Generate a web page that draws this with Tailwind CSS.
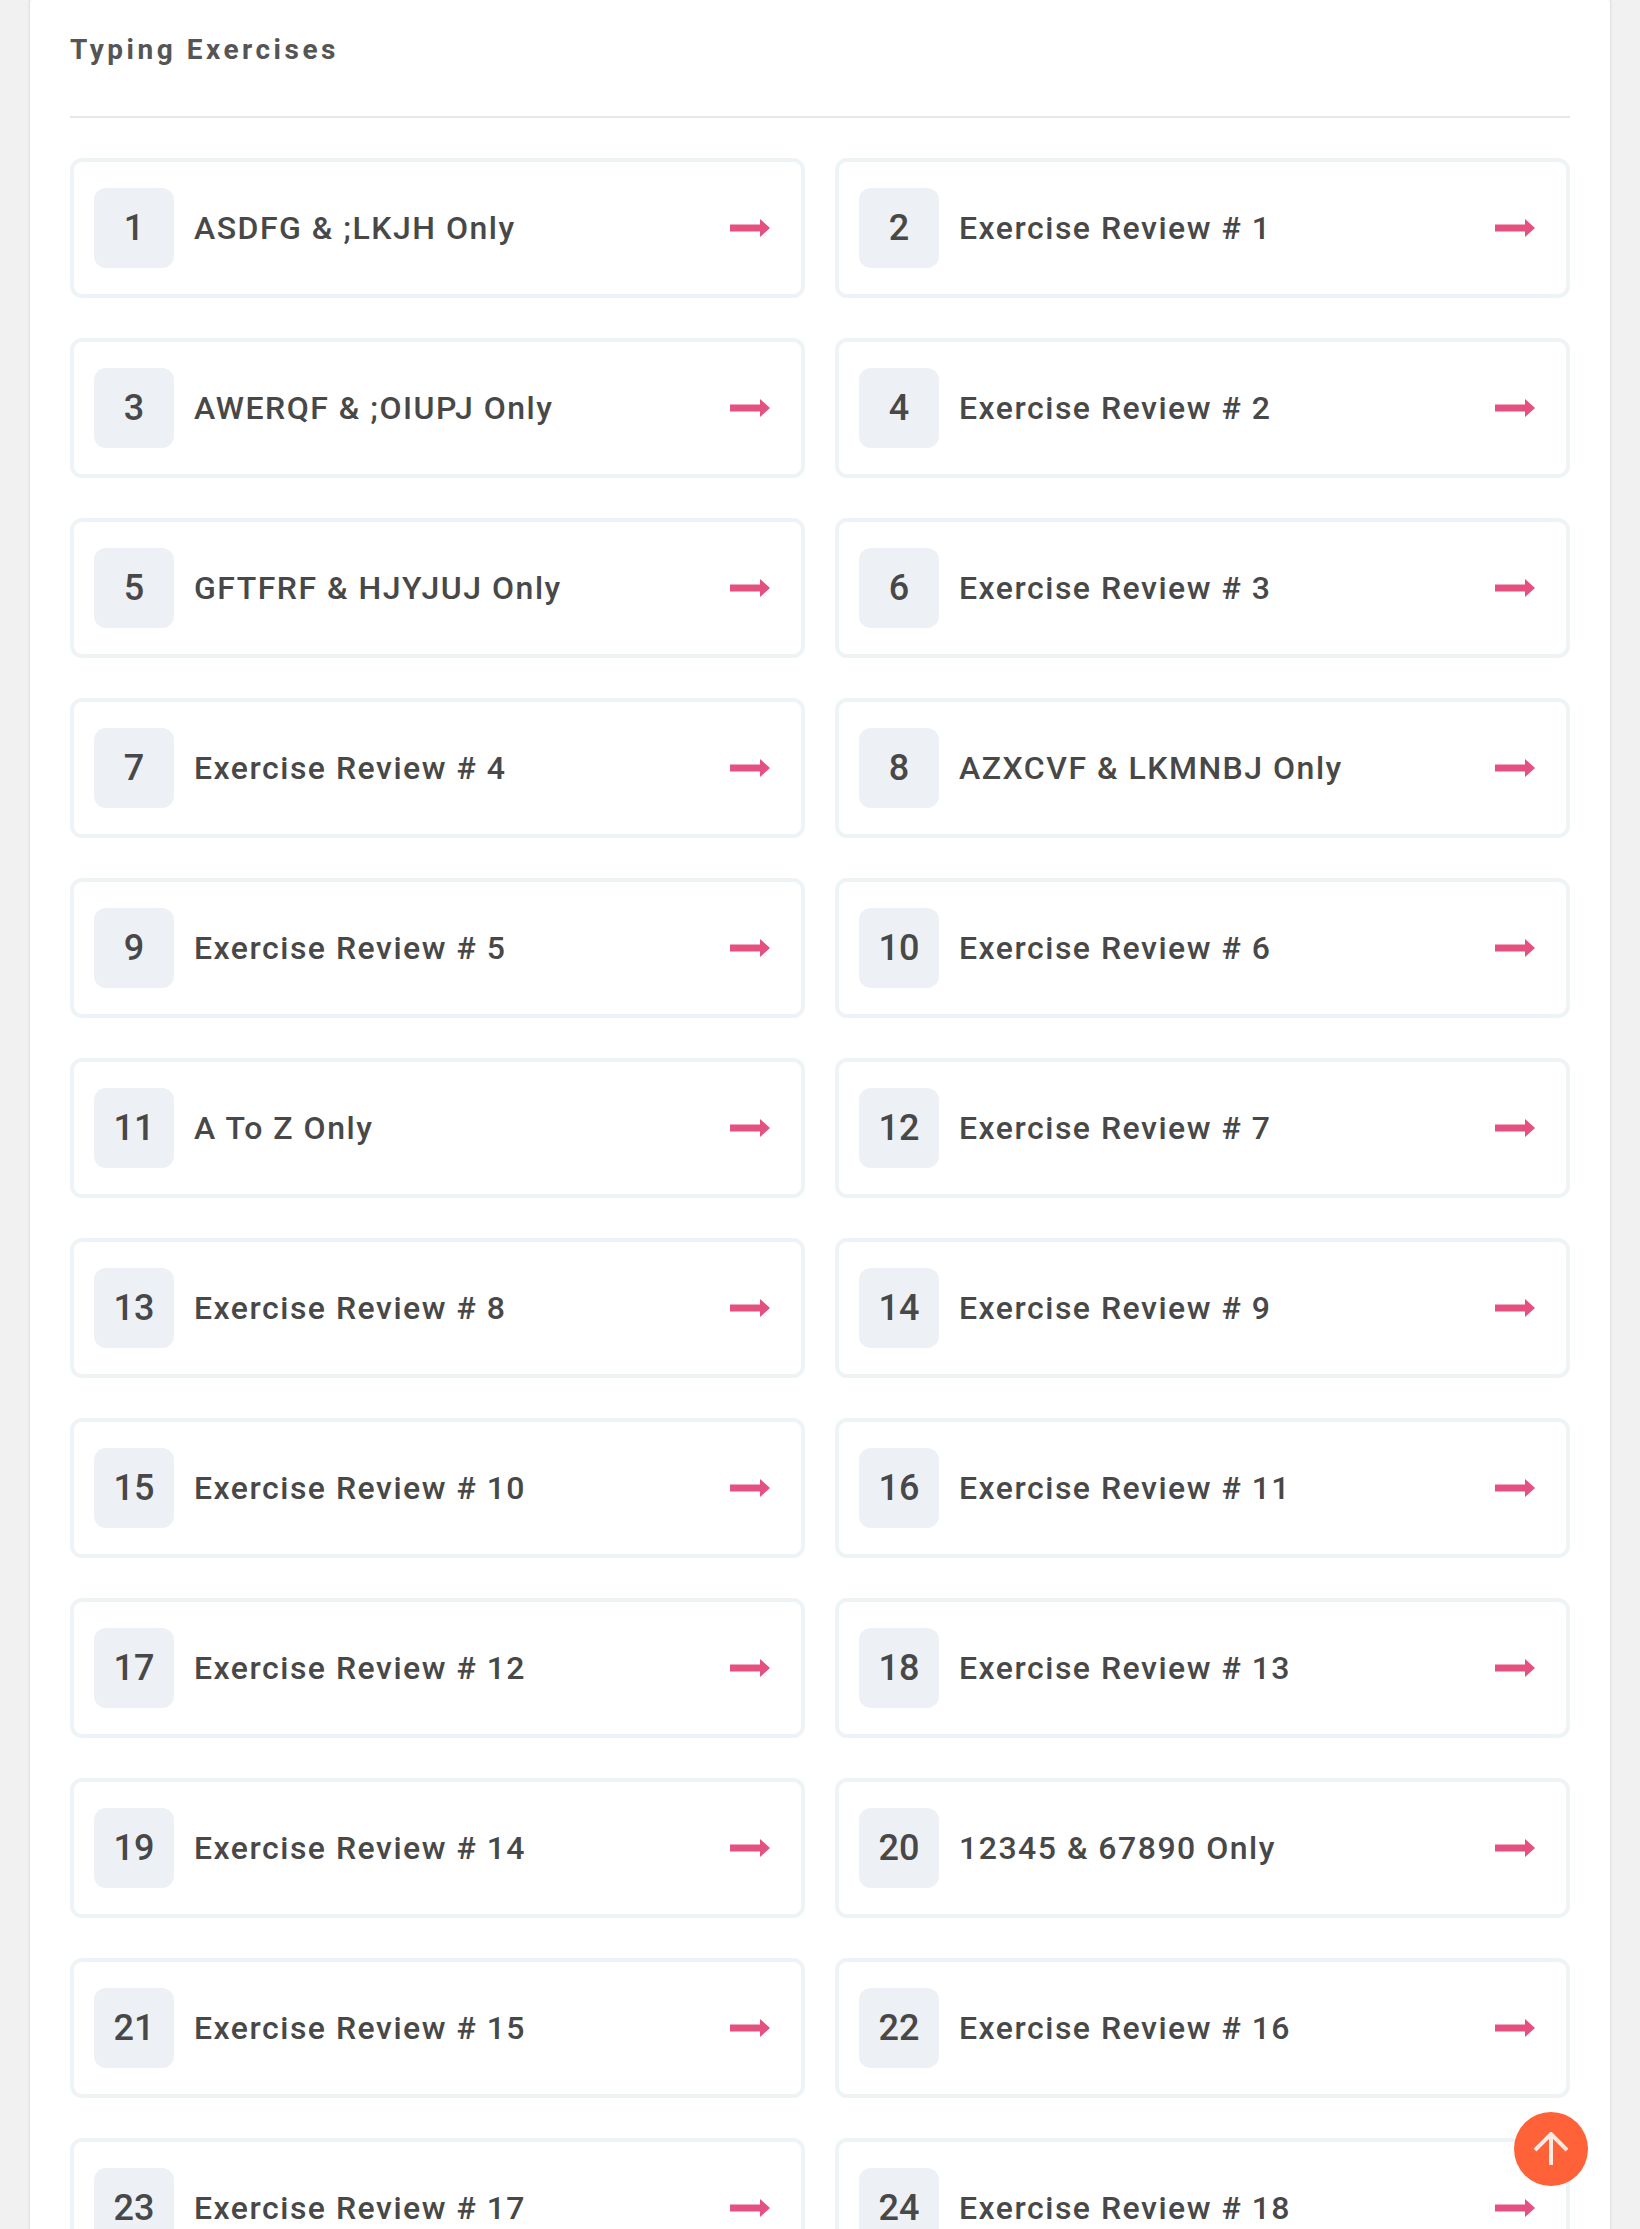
<!DOCTYPE html>
<html>
<head>
<meta charset="utf-8">
<script src="https://cdn.jsdelivr.net/npm/@tailwindcss/browser@4"></script>
</head>
<body class="bg-[#f1f1f2] font-['Roboto',sans-serif] h-[2229px] overflow-hidden">
<main class="mx-[30px] -mt-[12px] bg-white rounded-[16px] shadow-[0_0_3px_rgba(0,0,0,0.18)] px-[40px] pt-[12px] h-[2400px]">
  <h2 class="pt-[33px] pb-[50px] leading-[33px] text-[28px] font-bold tracking-[3.5px] text-[#555] border-b-2 border-[#e6e7e8]">Typing Exercises</h2>
  <div class="grid grid-cols-2 gap-x-[30px] gap-y-[40px] mt-[40px]">
    <a class="flex items-center h-[140px] border-4 border-[#eef3f6] rounded-[12px] pl-[20px] pr-[31px]"><span class="w-[80px] h-[80px] rounded-[12px] bg-[#edf1f5] flex items-center justify-center text-[36px] font-medium text-[#484848]">1</span><span class="ml-[20px] flex-1 text-[32px] font-medium tracking-[1.5px] text-[#484848]">ASDFG &amp; ;LKJH Only</span><svg class="w-[40px] h-[18px] text-[#e4507f]" viewBox="0 0 40 18"><path fill="currentColor" d="M0 5.5h30V0l10 9-10 9v-5.5H0z"/></svg></a>
    <a class="flex items-center h-[140px] border-4 border-[#eef3f6] rounded-[12px] pl-[20px] pr-[31px]"><span class="w-[80px] h-[80px] rounded-[12px] bg-[#edf1f5] flex items-center justify-center text-[36px] font-medium text-[#484848]">2</span><span class="ml-[20px] flex-1 text-[32px] font-medium tracking-[1.5px] text-[#484848]">Exercise Review # 1</span><svg class="w-[40px] h-[18px] text-[#e4507f]" viewBox="0 0 40 18"><path fill="currentColor" d="M0 5.5h30V0l10 9-10 9v-5.5H0z"/></svg></a>
    <a class="flex items-center h-[140px] border-4 border-[#eef3f6] rounded-[12px] pl-[20px] pr-[31px]"><span class="w-[80px] h-[80px] rounded-[12px] bg-[#edf1f5] flex items-center justify-center text-[36px] font-medium text-[#484848]">3</span><span class="ml-[20px] flex-1 text-[32px] font-medium tracking-[1.5px] text-[#484848]">AWERQF &amp; ;OIUPJ Only</span><svg class="w-[40px] h-[18px] text-[#e4507f]" viewBox="0 0 40 18"><path fill="currentColor" d="M0 5.5h30V0l10 9-10 9v-5.5H0z"/></svg></a>
    <a class="flex items-center h-[140px] border-4 border-[#eef3f6] rounded-[12px] pl-[20px] pr-[31px]"><span class="w-[80px] h-[80px] rounded-[12px] bg-[#edf1f5] flex items-center justify-center text-[36px] font-medium text-[#484848]">4</span><span class="ml-[20px] flex-1 text-[32px] font-medium tracking-[1.5px] text-[#484848]">Exercise Review # 2</span><svg class="w-[40px] h-[18px] text-[#e4507f]" viewBox="0 0 40 18"><path fill="currentColor" d="M0 5.5h30V0l10 9-10 9v-5.5H0z"/></svg></a>
    <a class="flex items-center h-[140px] border-4 border-[#eef3f6] rounded-[12px] pl-[20px] pr-[31px]"><span class="w-[80px] h-[80px] rounded-[12px] bg-[#edf1f5] flex items-center justify-center text-[36px] font-medium text-[#484848]">5</span><span class="ml-[20px] flex-1 text-[32px] font-medium tracking-[1.5px] text-[#484848]">GFTFRF &amp; HJYJUJ Only</span><svg class="w-[40px] h-[18px] text-[#e4507f]" viewBox="0 0 40 18"><path fill="currentColor" d="M0 5.5h30V0l10 9-10 9v-5.5H0z"/></svg></a>
    <a class="flex items-center h-[140px] border-4 border-[#eef3f6] rounded-[12px] pl-[20px] pr-[31px]"><span class="w-[80px] h-[80px] rounded-[12px] bg-[#edf1f5] flex items-center justify-center text-[36px] font-medium text-[#484848]">6</span><span class="ml-[20px] flex-1 text-[32px] font-medium tracking-[1.5px] text-[#484848]">Exercise Review # 3</span><svg class="w-[40px] h-[18px] text-[#e4507f]" viewBox="0 0 40 18"><path fill="currentColor" d="M0 5.5h30V0l10 9-10 9v-5.5H0z"/></svg></a>
    <a class="flex items-center h-[140px] border-4 border-[#eef3f6] rounded-[12px] pl-[20px] pr-[31px]"><span class="w-[80px] h-[80px] rounded-[12px] bg-[#edf1f5] flex items-center justify-center text-[36px] font-medium text-[#484848]">7</span><span class="ml-[20px] flex-1 text-[32px] font-medium tracking-[1.5px] text-[#484848]">Exercise Review # 4</span><svg class="w-[40px] h-[18px] text-[#e4507f]" viewBox="0 0 40 18"><path fill="currentColor" d="M0 5.5h30V0l10 9-10 9v-5.5H0z"/></svg></a>
    <a class="flex items-center h-[140px] border-4 border-[#eef3f6] rounded-[12px] pl-[20px] pr-[31px]"><span class="w-[80px] h-[80px] rounded-[12px] bg-[#edf1f5] flex items-center justify-center text-[36px] font-medium text-[#484848]">8</span><span class="ml-[20px] flex-1 text-[32px] font-medium tracking-[1.5px] text-[#484848]">AZXCVF &amp; LKMNBJ Only</span><svg class="w-[40px] h-[18px] text-[#e4507f]" viewBox="0 0 40 18"><path fill="currentColor" d="M0 5.5h30V0l10 9-10 9v-5.5H0z"/></svg></a>
    <a class="flex items-center h-[140px] border-4 border-[#eef3f6] rounded-[12px] pl-[20px] pr-[31px]"><span class="w-[80px] h-[80px] rounded-[12px] bg-[#edf1f5] flex items-center justify-center text-[36px] font-medium text-[#484848]">9</span><span class="ml-[20px] flex-1 text-[32px] font-medium tracking-[1.5px] text-[#484848]">Exercise Review # 5</span><svg class="w-[40px] h-[18px] text-[#e4507f]" viewBox="0 0 40 18"><path fill="currentColor" d="M0 5.5h30V0l10 9-10 9v-5.5H0z"/></svg></a>
    <a class="flex items-center h-[140px] border-4 border-[#eef3f6] rounded-[12px] pl-[20px] pr-[31px]"><span class="w-[80px] h-[80px] rounded-[12px] bg-[#edf1f5] flex items-center justify-center text-[36px] font-medium text-[#484848]">10</span><span class="ml-[20px] flex-1 text-[32px] font-medium tracking-[1.5px] text-[#484848]">Exercise Review # 6</span><svg class="w-[40px] h-[18px] text-[#e4507f]" viewBox="0 0 40 18"><path fill="currentColor" d="M0 5.5h30V0l10 9-10 9v-5.5H0z"/></svg></a>
    <a class="flex items-center h-[140px] border-4 border-[#eef3f6] rounded-[12px] pl-[20px] pr-[31px]"><span class="w-[80px] h-[80px] rounded-[12px] bg-[#edf1f5] flex items-center justify-center text-[36px] font-medium text-[#484848]">11</span><span class="ml-[20px] flex-1 text-[32px] font-medium tracking-[1.5px] text-[#484848]">A To Z Only</span><svg class="w-[40px] h-[18px] text-[#e4507f]" viewBox="0 0 40 18"><path fill="currentColor" d="M0 5.5h30V0l10 9-10 9v-5.5H0z"/></svg></a>
    <a class="flex items-center h-[140px] border-4 border-[#eef3f6] rounded-[12px] pl-[20px] pr-[31px]"><span class="w-[80px] h-[80px] rounded-[12px] bg-[#edf1f5] flex items-center justify-center text-[36px] font-medium text-[#484848]">12</span><span class="ml-[20px] flex-1 text-[32px] font-medium tracking-[1.5px] text-[#484848]">Exercise Review # 7</span><svg class="w-[40px] h-[18px] text-[#e4507f]" viewBox="0 0 40 18"><path fill="currentColor" d="M0 5.5h30V0l10 9-10 9v-5.5H0z"/></svg></a>
    <a class="flex items-center h-[140px] border-4 border-[#eef3f6] rounded-[12px] pl-[20px] pr-[31px]"><span class="w-[80px] h-[80px] rounded-[12px] bg-[#edf1f5] flex items-center justify-center text-[36px] font-medium text-[#484848]">13</span><span class="ml-[20px] flex-1 text-[32px] font-medium tracking-[1.5px] text-[#484848]">Exercise Review # 8</span><svg class="w-[40px] h-[18px] text-[#e4507f]" viewBox="0 0 40 18"><path fill="currentColor" d="M0 5.5h30V0l10 9-10 9v-5.5H0z"/></svg></a>
    <a class="flex items-center h-[140px] border-4 border-[#eef3f6] rounded-[12px] pl-[20px] pr-[31px]"><span class="w-[80px] h-[80px] rounded-[12px] bg-[#edf1f5] flex items-center justify-center text-[36px] font-medium text-[#484848]">14</span><span class="ml-[20px] flex-1 text-[32px] font-medium tracking-[1.5px] text-[#484848]">Exercise Review # 9</span><svg class="w-[40px] h-[18px] text-[#e4507f]" viewBox="0 0 40 18"><path fill="currentColor" d="M0 5.5h30V0l10 9-10 9v-5.5H0z"/></svg></a>
    <a class="flex items-center h-[140px] border-4 border-[#eef3f6] rounded-[12px] pl-[20px] pr-[31px]"><span class="w-[80px] h-[80px] rounded-[12px] bg-[#edf1f5] flex items-center justify-center text-[36px] font-medium text-[#484848]">15</span><span class="ml-[20px] flex-1 text-[32px] font-medium tracking-[1.5px] text-[#484848]">Exercise Review # 10</span><svg class="w-[40px] h-[18px] text-[#e4507f]" viewBox="0 0 40 18"><path fill="currentColor" d="M0 5.5h30V0l10 9-10 9v-5.5H0z"/></svg></a>
    <a class="flex items-center h-[140px] border-4 border-[#eef3f6] rounded-[12px] pl-[20px] pr-[31px]"><span class="w-[80px] h-[80px] rounded-[12px] bg-[#edf1f5] flex items-center justify-center text-[36px] font-medium text-[#484848]">16</span><span class="ml-[20px] flex-1 text-[32px] font-medium tracking-[1.5px] text-[#484848]">Exercise Review # 11</span><svg class="w-[40px] h-[18px] text-[#e4507f]" viewBox="0 0 40 18"><path fill="currentColor" d="M0 5.5h30V0l10 9-10 9v-5.5H0z"/></svg></a>
    <a class="flex items-center h-[140px] border-4 border-[#eef3f6] rounded-[12px] pl-[20px] pr-[31px]"><span class="w-[80px] h-[80px] rounded-[12px] bg-[#edf1f5] flex items-center justify-center text-[36px] font-medium text-[#484848]">17</span><span class="ml-[20px] flex-1 text-[32px] font-medium tracking-[1.5px] text-[#484848]">Exercise Review # 12</span><svg class="w-[40px] h-[18px] text-[#e4507f]" viewBox="0 0 40 18"><path fill="currentColor" d="M0 5.5h30V0l10 9-10 9v-5.5H0z"/></svg></a>
    <a class="flex items-center h-[140px] border-4 border-[#eef3f6] rounded-[12px] pl-[20px] pr-[31px]"><span class="w-[80px] h-[80px] rounded-[12px] bg-[#edf1f5] flex items-center justify-center text-[36px] font-medium text-[#484848]">18</span><span class="ml-[20px] flex-1 text-[32px] font-medium tracking-[1.5px] text-[#484848]">Exercise Review # 13</span><svg class="w-[40px] h-[18px] text-[#e4507f]" viewBox="0 0 40 18"><path fill="currentColor" d="M0 5.5h30V0l10 9-10 9v-5.5H0z"/></svg></a>
    <a class="flex items-center h-[140px] border-4 border-[#eef3f6] rounded-[12px] pl-[20px] pr-[31px]"><span class="w-[80px] h-[80px] rounded-[12px] bg-[#edf1f5] flex items-center justify-center text-[36px] font-medium text-[#484848]">19</span><span class="ml-[20px] flex-1 text-[32px] font-medium tracking-[1.5px] text-[#484848]">Exercise Review # 14</span><svg class="w-[40px] h-[18px] text-[#e4507f]" viewBox="0 0 40 18"><path fill="currentColor" d="M0 5.5h30V0l10 9-10 9v-5.5H0z"/></svg></a>
    <a class="flex items-center h-[140px] border-4 border-[#eef3f6] rounded-[12px] pl-[20px] pr-[31px]"><span class="w-[80px] h-[80px] rounded-[12px] bg-[#edf1f5] flex items-center justify-center text-[36px] font-medium text-[#484848]">20</span><span class="ml-[20px] flex-1 text-[32px] font-medium tracking-[1.5px] text-[#484848]">12345 &amp; 67890 Only</span><svg class="w-[40px] h-[18px] text-[#e4507f]" viewBox="0 0 40 18"><path fill="currentColor" d="M0 5.5h30V0l10 9-10 9v-5.5H0z"/></svg></a>
    <a class="flex items-center h-[140px] border-4 border-[#eef3f6] rounded-[12px] pl-[20px] pr-[31px]"><span class="w-[80px] h-[80px] rounded-[12px] bg-[#edf1f5] flex items-center justify-center text-[36px] font-medium text-[#484848]">21</span><span class="ml-[20px] flex-1 text-[32px] font-medium tracking-[1.5px] text-[#484848]">Exercise Review # 15</span><svg class="w-[40px] h-[18px] text-[#e4507f]" viewBox="0 0 40 18"><path fill="currentColor" d="M0 5.5h30V0l10 9-10 9v-5.5H0z"/></svg></a>
    <a class="flex items-center h-[140px] border-4 border-[#eef3f6] rounded-[12px] pl-[20px] pr-[31px]"><span class="w-[80px] h-[80px] rounded-[12px] bg-[#edf1f5] flex items-center justify-center text-[36px] font-medium text-[#484848]">22</span><span class="ml-[20px] flex-1 text-[32px] font-medium tracking-[1.5px] text-[#484848]">Exercise Review # 16</span><svg class="w-[40px] h-[18px] text-[#e4507f]" viewBox="0 0 40 18"><path fill="currentColor" d="M0 5.5h30V0l10 9-10 9v-5.5H0z"/></svg></a>
    <a class="flex items-center h-[140px] border-4 border-[#eef3f6] rounded-[12px] pl-[20px] pr-[31px]"><span class="w-[80px] h-[80px] rounded-[12px] bg-[#edf1f5] flex items-center justify-center text-[36px] font-medium text-[#484848]">23</span><span class="ml-[20px] flex-1 text-[32px] font-medium tracking-[1.5px] text-[#484848]">Exercise Review # 17</span><svg class="w-[40px] h-[18px] text-[#e4507f]" viewBox="0 0 40 18"><path fill="currentColor" d="M0 5.5h30V0l10 9-10 9v-5.5H0z"/></svg></a>
    <a class="flex items-center h-[140px] border-4 border-[#eef3f6] rounded-[12px] pl-[20px] pr-[31px]"><span class="w-[80px] h-[80px] rounded-[12px] bg-[#edf1f5] flex items-center justify-center text-[36px] font-medium text-[#484848]">24</span><span class="ml-[20px] flex-1 text-[32px] font-medium tracking-[1.5px] text-[#484848]">Exercise Review # 18</span><svg class="w-[40px] h-[18px] text-[#e4507f]" viewBox="0 0 40 18"><path fill="currentColor" d="M0 5.5h30V0l10 9-10 9v-5.5H0z"/></svg></a>
  </div>
</main>
<button class="fixed left-[1514px] top-[2112px] w-[74px] h-[74px] rounded-full bg-[#ff6239] flex items-center justify-center"><svg class="w-[34px] h-[34px]" viewBox="0 0 34 34" fill="none" stroke="#ffe9e0" stroke-width="4"><path d="M17 33V2M1 18 17 2l16 16"/></svg></button>
</body>
</html>
